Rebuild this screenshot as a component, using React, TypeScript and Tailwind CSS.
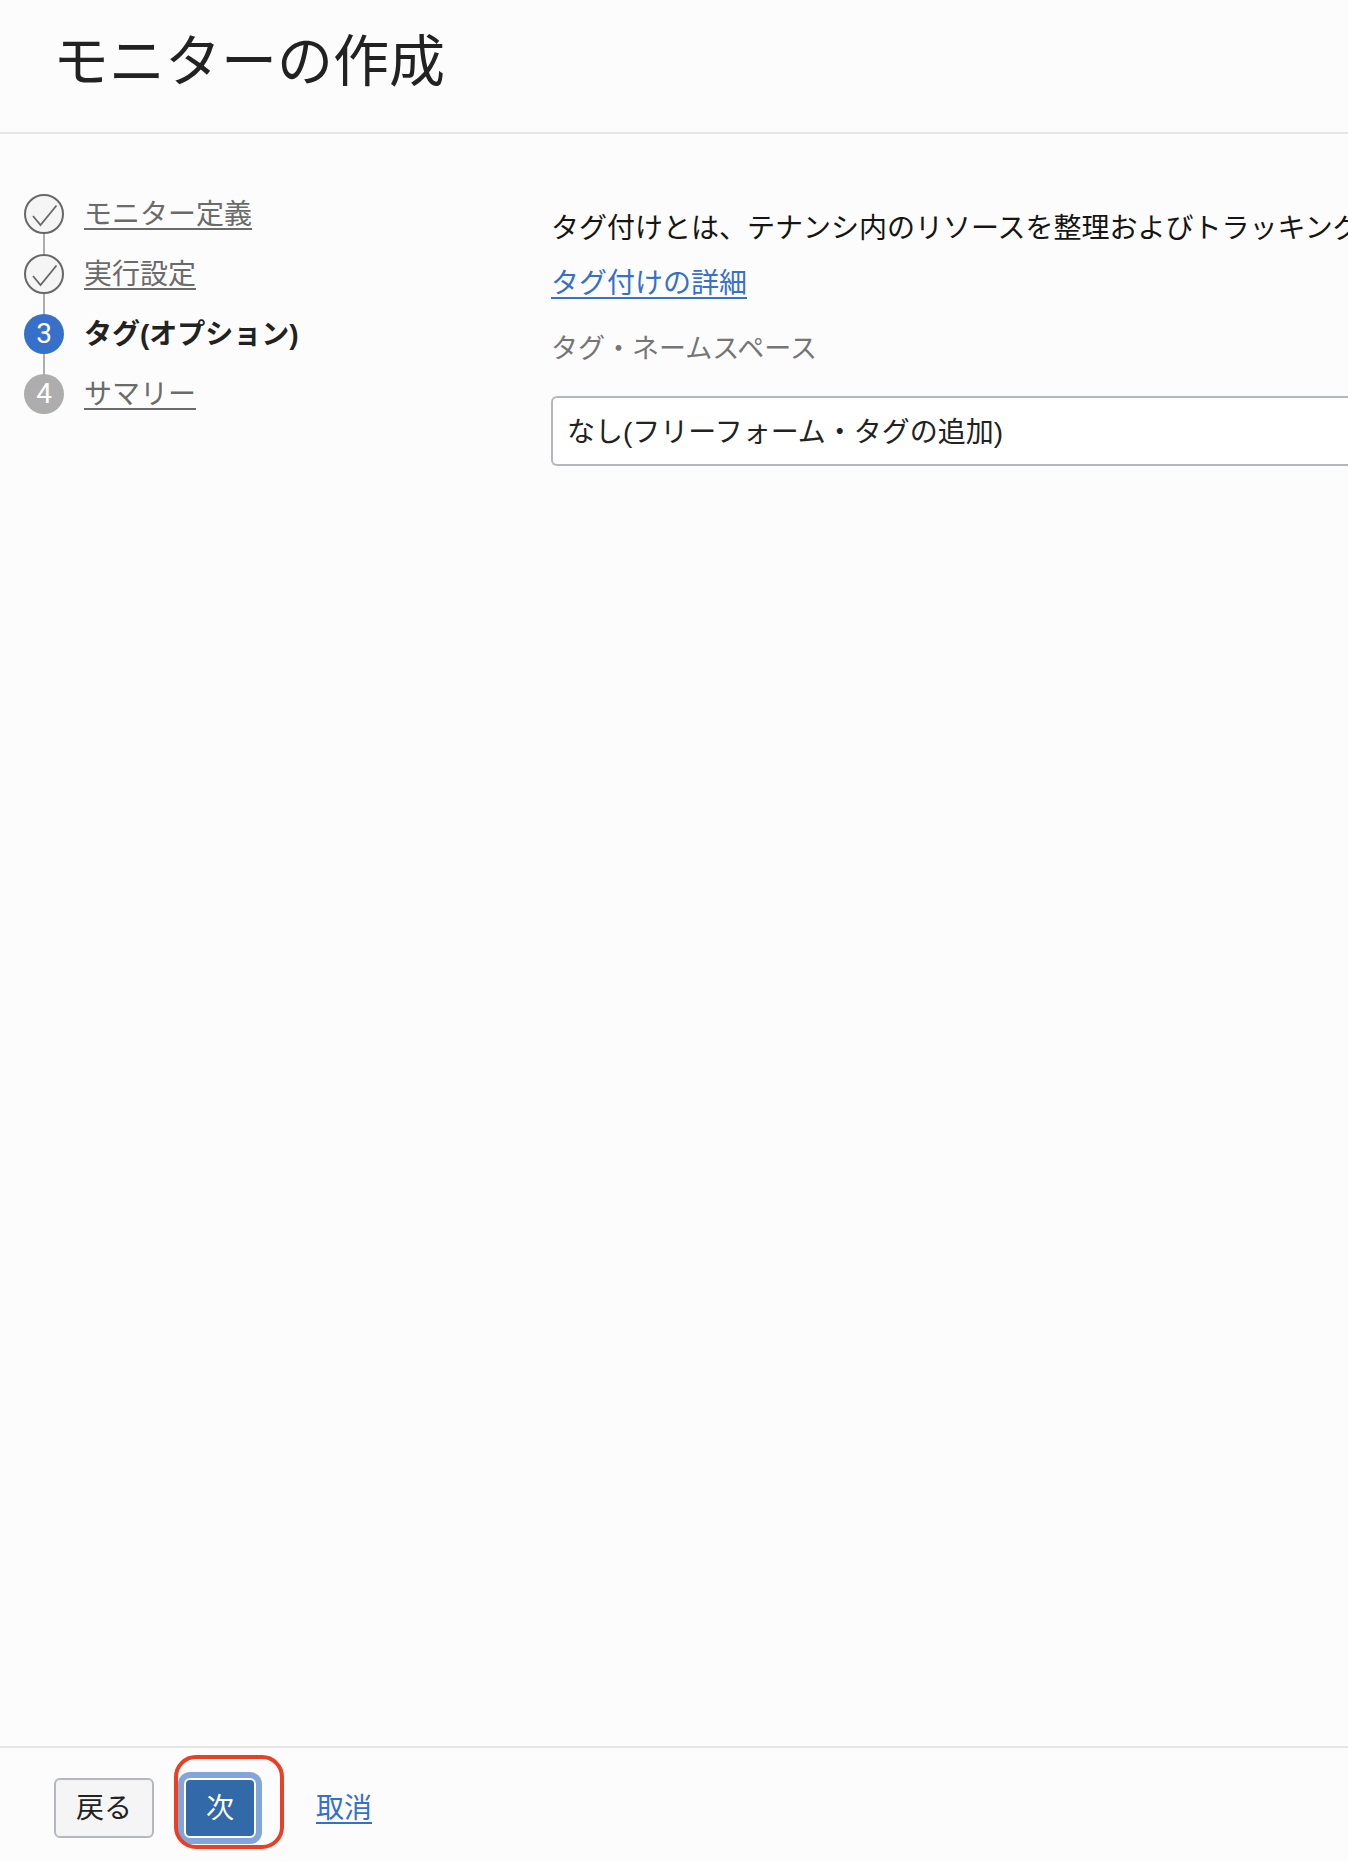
import React from "react";

type StepState = "done" | "current" | "todo";

const steps: { label: string; state: StepState }[] = [
  { label: "モニター定義", state: "done" },
  { label: "実行設定", state: "done" },
  { label: "タグ(オプション)", state: "current" },
  { label: "サマリー", state: "todo" },
];

function StepMarker({ state, index }: { state: StepState; index: number }) {
  if (state === "done") {
    return (
      <svg viewBox="0 0 40 40" className="size-10 shrink-0" fill="none" aria-hidden="true">
        <circle cx="20" cy="20" r="19" fill="#f5f5f5" stroke="#686868" strokeWidth="2" />
        <path d="M9 22l7.500 9L32.500 11.500" stroke="#686868" strokeWidth="1.800" />
      </svg>
    );
  }
  return (
    <span
      className={
        state === "current"
          ? "flex size-10 shrink-0 items-center justify-center rounded-full bg-[#3770c8] font-['Roboto',sans-serif] text-white"
          : "flex size-10 shrink-0 items-center justify-center rounded-full bg-[#adadad] font-['Roboto',sans-serif] text-white"
      }
    >
      {index + 1}
    </span>
  );
}

function Steps() {
  return (
    <nav aria-label="ステップ" className="w-[551px] shrink-0 pt-[60px] pl-6">
      <ol>
        {steps.map((step, i) => (
          <li key={step.label}>
            {i > 0 && <div className="ml-[19px] h-5 w-0.5 bg-[#adadad]" />}
            <div className="flex h-10 items-center gap-5">
              <StepMarker state={step.state} index={i} />
              {step.state === "current" ? (
                <span aria-current="step" className="pt-0.5 font-bold text-[#222222]">
                  {step.label}
                </span>
              ) : (
                <a
                  href="#"
                  className="pt-0.5 text-[#6b6b6b] underline decoration-2 underline-offset-4"
                >
                  {step.label}
                </a>
              )}
            </div>
          </li>
        ))}
      </ol>
    </nav>
  );
}

export default function App() {
  return (
    <div
      lang="ja"
      className="flex min-h-screen flex-col overflow-hidden bg-[#fcfcfc] font-['Liberation_Sans','Noto_Sans_CJK_JP',sans-serif] text-[28px] leading-10 text-[#222222]"
    >
      <header className="border-b-2 border-[#e6e6e6] px-[53px] pt-[22px] pb-[30px]">
        <h1 className="text-[56px] leading-[80px]">モニターの作成</h1>
      </header>

      <div className="flex grow">
        <Steps />
        <main className="min-w-0 grow pt-[75px]">
          <p className="whitespace-nowrap text-[#161513]">
            タグ付けとは、テナンシ内のリソースを整理およびトラッキング
          </p>
          <p className="mt-[15px]">
            <a href="#" className="text-[#3770c8] underline decoration-2 underline-offset-4">
              タグ付けの詳細
            </a>
          </p>
          <label htmlFor="namespace" className="mt-[25px] block text-[27px] text-[#757575]">
            タグ・ネームスペース
          </label>
          <select
            id="namespace"
            className="mt-[27px] block h-[70px] w-full appearance-none rounded-l-md border-2 border-r-0 border-[#b4b8be] bg-white px-3.5 pt-1 text-[#222222]"
          >
            <option>なし(フリーフォーム・タグの追加)</option>
          </select>
        </main>
      </div>

      <footer className="flex items-center border-t-2 border-[#e6e6e6] px-[54px] pt-[30px] pb-6">
        <button
          type="button"
          className="h-[60px] w-[100px] rounded-md border-2 border-[#b4b8be] bg-[#f5f5f5] pt-0.5"
        >
          戻る
        </button>
        <div className="relative ml-[30px]">
          <button
            type="button"
            className="block h-[60px] w-[72px] rounded-md border-2 border-white bg-[#3269a8] pt-0.5 text-white ring-6 ring-[#82a5dc]"
          >
            次
          </button>
          <div className="pointer-events-none absolute -top-[23px] -right-7 -bottom-[11px] -left-2.5 rounded-[22px] border-4 border-[#e94025]" />
        </div>
        <a
          href="#"
          className="ml-[60px] pt-0.5 text-[#3770c8] underline decoration-2 underline-offset-4"
        >
          取消
        </a>
      </footer>
    </div>
  );
}
